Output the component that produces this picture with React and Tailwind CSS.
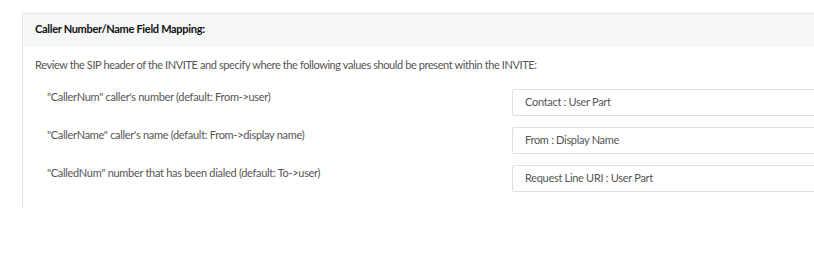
import React from 'react';

const rows = [
  { label: '"CallerNum" caller\'s number (default: From->user)', value: 'Contact : User Part' },
  { label: '"CallerName" caller\'s name (default: From->display name)', value: 'From : Display Name' },
  { label: '"CalledNum" number that has been dialed (default: To->user)', value: 'Request Line URI : User Part' },
];

export default function App() {
  return (
    <div className="w-[814px] h-[253px] bg-white pt-[13px] pl-[22px] overflow-hidden font-['Lato','Liberation_Sans',sans-serif] text-[11px] tracking-[-0.3px]">
      <div className="border-l border-t border-[#e3e6e6] w-[820px] pb-[16px]">
        <div className="h-[32px] bg-[#f5f6f6] border-b border-[#eef0f0] flex items-center pl-[12px]">
          <span className="font-bold text-[#111] text-[11px]">Caller Number/Name Field Mapping:</span>
        </div>
        <p className="text-[#555] mt-[11px] pl-[12px] leading-[16px] tracking-[-0.4px]">
          Review the SIP header of the INVITE and specify where the following values should be present within the INVITE:
        </p>
        <div className="mt-[16px] flex flex-col gap-[11px]">
          {rows.map((r) => (
            <div key={r.value} className="flex items-start">
              <div className="w-[489px] pl-[24px] text-[#555] leading-[16px]">{r.label}</div>
              <div className="flex-1 h-[27px] border border-[#dde1e1] rounded-[2px] flex items-center pl-[12px] text-[#555]">
                {r.value}
              </div>
            </div>
          ))}
        </div>
      </div>
    </div>
  );
}
